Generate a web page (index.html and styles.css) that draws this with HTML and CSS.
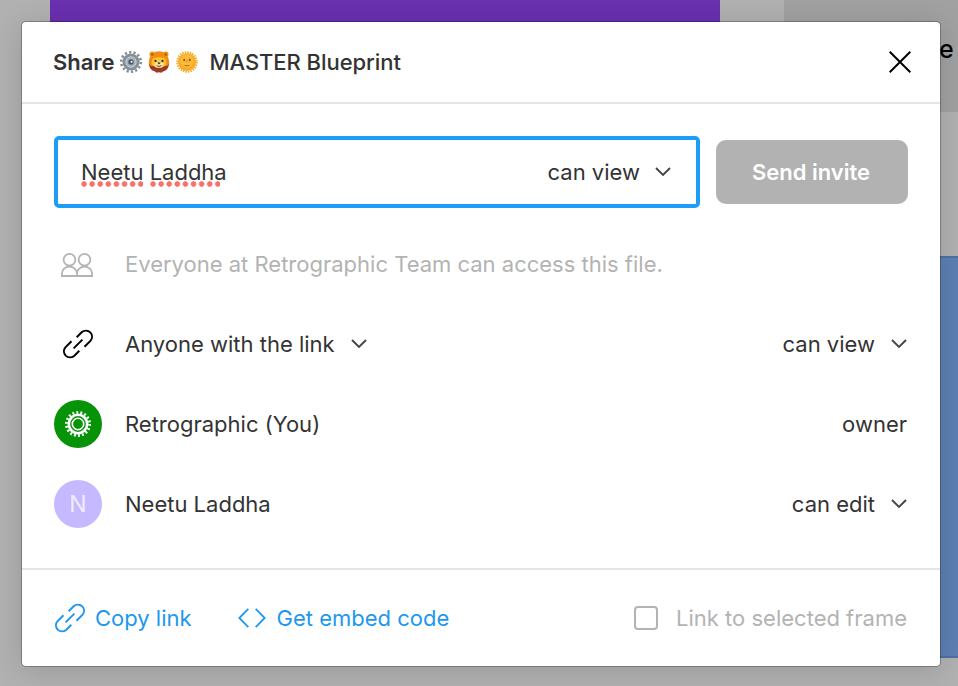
FILE: index.html
```html
<!DOCTYPE html>
<html lang="en">
<head>
  <meta charset="UTF-8">
  <meta name="viewport" content="width=device-width, initial-scale=1.0">
  <title>Share</title>
  <link rel="stylesheet" href="styles.css">
</head>
<body>

  <!-- Canvas behind the dialog -->
  <div class="canvas">
    <div class="frame frame-purple"></div>
    <div class="frame frame-grey"></div>
    <div class="frame frame-blue"></div>
    <span class="canvas-text">e</span>
  </div>

  <div class="modal">
    <div class="modal-header">
      <h1><strong>Share</strong>
        <svg class="emoji" viewBox="0 0 24 24">
          <circle cx="12" cy="12" r="9.8" fill="none" stroke="#858f98" stroke-width="2.6" stroke-dasharray="2.2 2.2"/>
          <circle cx="12" cy="12" r="6.6" fill="#b4bdc6" stroke="#84909a" stroke-width="4"/>
          <circle cx="12" cy="12" r="5.2" fill="#a6b1bc" stroke="#c9d0d6" stroke-width="1"/>
          <circle cx="12" cy="12" r="2.7" fill="#4c5966"/>
          <circle cx="12.6" cy="11.8" r="1.1" fill="#e8edf1"/>
        </svg>
        <svg class="emoji" viewBox="0 0 24 24">
          <path d="M2.600 10.500C1.300 14 2.200 18 5 20.300L8 21.500l1.500 1.300L12 22.300l2.500.5L16 21.500l3-1.200c2.800-2.300 3.700-6.300 2.400-9.800z" fill="#9c3a22"/>
          <path d="M12 1.200c5 0 8.800 3 9.700 8l.7 4.300-2.400 2.500H4l-2.400-2.500.7-4.300c.9-5 4.700-8 9.700-8z" fill="#f08d12"/>
          <circle cx="5.200" cy="4.300" r="2.700" fill="#f0950f"/>
          <circle cx="18.800" cy="4.300" r="2.700" fill="#f0950f"/>
          <circle cx="5.300" cy="4.500" r="1.300" fill="#b35a1c"/>
          <circle cx="18.700" cy="4.500" r="1.300" fill="#b35a1c"/>
          <path d="M5.500 9.500c1.500-3 11.500-3 13 0l.9 3c0 3.200-3.700 5.300-7.400 5.300s-7.400-2.100-7.400-5.300z" fill="#fcc633"/>
          <ellipse cx="12" cy="14.700" rx="4.400" ry="2.900" fill="#fbe6b5"/>
          <circle cx="8.500" cy="10.900" r="1.100" fill="#35210f"/>
          <circle cx="15.500" cy="10.900" r="1.100" fill="#35210f"/>
          <path d="M10.200 12.500h3.600l-1.800 2z" fill="#35210f"/>
          <path d="M9.500 15.500q2.500 2 5 0" fill="none" stroke="#65351a" stroke-width=".9"/>
        </svg>
        <svg class="emoji" viewBox="0 0 24 24">
          <circle cx="12" cy="12" r="9.700" fill="none" stroke="#f3ae2a" stroke-width="2.200" stroke-dasharray="1.500 1.040"/>
          <circle cx="12" cy="12" r="9" fill="#fba928"/>
          <circle cx="12" cy="11" r="6.800" fill="#fdbb3a"/>
          <ellipse cx="9.200" cy="10" rx=".9" ry="1.300" fill="#8a4b12"/>
          <ellipse cx="14.800" cy="10" rx=".9" ry="1.300" fill="#8a4b12"/>
          <path d="M12 9.500v3.200" stroke="#e48b16" stroke-width="1"/>
          <path d="M9.500 15.300q2.500 1.300 5 0" fill="none" stroke="#b86b1c" stroke-width="1"/>
        </svg>
        <span class="file-name">MASTER Blueprint</span>
      </h1>
      <button class="close-btn" aria-label="Close">
        <svg width="22" height="22" viewBox="0 0 22 22"><path d="M.7.700l20.600 20.600M21.300.700L.7 21.300" stroke="#000" stroke-width="2"/></svg>
      </button>
    </div>

    <div class="modal-body">
      <div class="invite">
        <div class="invite-input">
          <span class="invite-name"><span class="misspelled">Neetu</span> <span class="misspelled last">Laddha</span></span>
          <span class="select">can view
            <svg class="chevron" viewBox="0 0 16 10"><path d="M1 1l7 7 7-7"/></svg>
          </span>
        </div>
        <button class="btn-send">Send invite</button>
      </div>

      <div class="row muted">
        <div class="row-icon">
          <svg class="people" width="32" height="24" viewBox="0 0 32 24">
            <circle cx="8.500" cy="6.800" r="5.900"/>
            <circle cx="23.500" cy="6.800" r="5.900"/>
            <path d="M.9 23V20.500c0-4 3.300-6.800 7.500-6.800s7.600 2.800 7.600 6.800V23zM16 23V20.500c0-4 3.300-6.800 7.500-6.800s7.600 2.800 7.600 6.800V23z"/>
          </svg>
        </div>
        <span class="row-name">Everyone at Retrographic Team can access this file.</span>
      </div>

      <div class="row">
        <div class="row-icon">
          <svg class="link-icon" viewBox="0 0 30 30">
            <path d="M13.700 8.300l5.200-5.200a6.300 6.300 0 0 1 8.400.3 6.300 6.300 0 0 1 .1 8.500l-5.900 5.900M16.300 21.700l-5.200 5.200a6.300 6.300 0 0 1-8.400-.3 6.300 6.300 0 0 1-.1-8.500l5.900-5.900M10.600 19.400l8.800-8.800"/>
          </svg>
        </div>
        <span class="row-name">Anyone with the link
          <svg class="chevron" viewBox="0 0 16 10"><path d="M1 1l7 7 7-7"/></svg>
        </span>
        <span class="select">can view
          <svg class="chevron" viewBox="0 0 16 10"><path d="M1 1l7 7 7-7"/></svg>
        </span>
      </div>

      <div class="row">
        <div class="row-icon avatar avatar-green">
          <svg width="28" height="28" viewBox="0 0 28 28" fill="none" stroke="#fff">
            <circle cx="14" cy="14" r="11.600" stroke-width="2.800" stroke-dasharray="1.900 2.149"/>
            <circle cx="14" cy="14" r="9.200" stroke-width="2.600"/>
            <circle cx="14" cy="14" r="5.700" stroke-width="1.600"/>
          </svg>
        </div>
        <span class="row-name">Retrographic (You)</span>
        <span class="select">owner</span>
      </div>

      <div class="row">
        <div class="row-icon avatar avatar-purple">N</div>
        <span class="row-name">Neetu Laddha</span>
        <span class="select">can edit
          <svg class="chevron" viewBox="0 0 16 10"><path d="M1 1l7 7 7-7"/></svg>
        </span>
      </div>
    </div>

    <div class="modal-footer">
      <a class="footer-link copy-link">
        <svg class="link-icon" viewBox="0 0 30 30">
          <path d="M13.700 8.300l5.200-5.200a6.300 6.300 0 0 1 8.400.3 6.300 6.300 0 0 1 .1 8.500l-5.900 5.900M16.300 21.700l-5.200 5.200a6.300 6.300 0 0 1-8.400-.3 6.300 6.300 0 0 1-.1-8.500l5.900-5.900M10.600 19.400l8.800-8.800"/>
        </svg>
        <span>Copy link</span>
      </a>
      <a class="footer-link embed-link">
        <svg class="code-icon" width="28" height="20" viewBox="0 0 28 20"><path d="M10.300.900L1.300 10l9 9.100M17.700.900l9 9.100-9 9.100"/></svg>
        <span>Get embed code</span>
      </a>
      <label class="frame-check">
        <span class="checkbox"></span>
        <span>Link to selected frame</span>
      </label>
    </div>
  </div>

</body>
</html>
```
FILE: styles.css
```css
* {
  box-sizing: border-box;
}

body {
  margin: 0;
  height: 686px;
  padding: 22px 18px 20px 22px;
  overflow: hidden;
  background: #b1b1b1;
  font-family: 'Inter', sans-serif;
  font-size: 22px;
  color: #333;
}

/* canvas */
.canvas {
  position: absolute;
  inset: 0;
  overflow: hidden;
}

.frame {
  position: absolute;
}

.frame-purple {
  left: 50px;
  top: 0;
  width: 670px;
  height: 100px;
  background: #6a30b0;
}

.frame-grey {
  left: 784px;
  top: 0;
  width: 174px;
  height: 112px;
  background: #a1a1a1;
}

.frame-blue {
  left: 800px;
  top: 256px;
  width: 158px;
  height: 402px;
  background: #5d7fb4;
  border: 2px solid #4f70a5;
  border-right: none;
}

.canvas-text {
  position: absolute;
  left: 939px;
  top: 34px;
  font-size: 25px;
  line-height: 30px;
  font-weight: 500;
  color: #000;
}

/* dialog */
.modal {
  position: relative;
  width: 918px;
  height: 644px;
  background: #fff;
  border-radius: 4px;
  box-shadow: 0 0 0 1px rgba(0, 0, 0, 0.25), 0 4px 30px rgba(0, 0, 0, 0.15);
}

.modal-header {
  display: flex;
  align-items: center;
  justify-content: space-between;
  height: 82px;
  padding: 0 29px 0 31px;
  border-bottom: 2px solid #e5e5e5;
}

h1 {
  display: flex;
  align-items: center;
  margin: 0;
  font-size: 22px;
  font-weight: 500;
  letter-spacing: -0.05px;
}

h1 strong {
  font-weight: 600;
  margin-right: 5px;
}

.emoji {
  width: 24px;
  height: 24px;
  margin-right: 4px;
}

.file-name {
  margin-left: 6px;
}

.close-btn {
  display: flex;
  padding: 0;
  border: none;
  background: none;
}

.modal-body {
  padding: 32px 32px 24px;
}

.invite {
  display: flex;
  align-items: center;
  justify-content: space-between;
  margin-bottom: 16px;
}

.invite-input {
  display: flex;
  align-items: center;
  justify-content: space-between;
  width: 646px;
  height: 72px;
  padding: 0 25px 0 23px;
  border: 4px solid #1e9df7;
  border-radius: 5px;
}

.invite-input .chevron {
  margin-left: 15px;
}

.misspelled {
  display: inline-block;
  padding-bottom: 2px;
  margin-bottom: -2px;
  background: radial-gradient(circle at 50% 50%, #f8706a 2.4px, transparent 3.1px) -1px 100% / 8.1px 6px repeat-x;
}

.misspelled.last {
  background:
    linear-gradient(#fff, #fff) 100% 100% / 7px 6px no-repeat,
    radial-gradient(circle at 50% 50%, #f8706a 2.4px, transparent 3.1px) -1px 100% / 8.1px 6px repeat-x;
}

.btn-send {
  width: 192px;
  height: 64px;
  padding: 0 8px 0 6px;
  border: none;
  border-radius: 10px;
  background: #b2b2b2;
  color: #fff;
  font-family: inherit;
  font-size: 22px;
  font-weight: 600;
}

.row {
  display: flex;
  align-items: center;
  height: 80px;
}

.row-icon {
  display: flex;
  align-items: center;
  justify-content: center;
  width: 48px;
  height: 48px;
  margin-right: 23px;
}

.row-name {
  display: flex;
  align-items: center;
}

.row-name .chevron {
  margin-left: 16px;
}

.row .select {
  margin-left: auto;
  margin-right: 1px;
}

.muted {
  color: #b3b3b3;
}

.people {
  fill: none;
  stroke: #b3b3b3;
  stroke-width: 1.8;
  margin: 1px 2px 0 0;
}

.select {
  display: flex;
  align-items: center;
}

.chevron {
  width: 16px;
  height: 10px;
  margin-left: 16px;
  fill: none;
  stroke: #444;
  stroke-width: 1.9;
}

.link-icon {
  width: 30px;
  height: 30px;
  fill: none;
  stroke: #000;
  stroke-width: 2;
}

.avatar {
  border-radius: 50%;
}

.avatar-green {
  background: #079307;
}

.avatar-purple {
  background: #c7b9ff;
  color: #f1edff;
  font-size: 23px;
}

.modal-footer {
  display: flex;
  align-items: center;
  height: 98px;
  padding: 0 33px;
  border-top: 2px solid #e5e5e5;
}

.footer-link {
  display: flex;
  align-items: center;
  color: #1e98ee;
}

.footer-link .link-icon {
  margin-right: 10px;
  stroke: #1e98ee;
}

.copy-link {
  margin-right: 46px;
}

.code-icon {
  margin-right: 11px;
  fill: none;
  stroke: #1e98ee;
  stroke-width: 1.8;
}

.frame-check {
  display: flex;
  align-items: center;
  margin-left: auto;
  color: #b3b3b3;
}

.checkbox {
  width: 24px;
  height: 24px;
  margin-right: 18px;
  border: 2px solid #b3b3b3;
  border-radius: 4px;
}
```
